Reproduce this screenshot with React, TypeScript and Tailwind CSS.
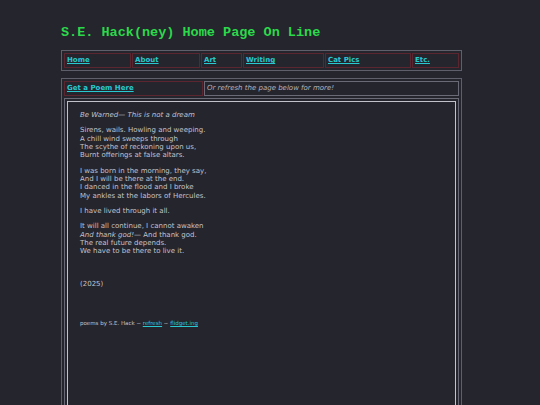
const navLinks = [
  { label: "Home", w: "w-[67px]" },
  { label: "About", w: "w-[68px]" },
  { label: "Art", w: "w-[41px]" },
  { label: "Writing", w: "w-[81px]" },
  { label: "Cat Pics", w: "w-[86px]" },
  { label: "Etc.", w: "flex-1" },
];

const stanzas: React.ReactNode[][] = [
  [
    "Sirens, wails. Howling and weeping.",
    "A chill wind sweeps through",
    "The scythe of reckoning upon us,",
    "Burnt offerings at false altars.",
  ],
  [
    "I was born in the morning, they say,",
    "And I will be there at the end.",
    "I danced in the flood and I broke",
    "My ankles at the labors of Hercules.",
  ],
  ["I have lived through it all."],
  [
    "It will all continue, I cannot awaken",
    <>
      <em>And thank god!</em>— And thank god.
    </>,
    "The real future depends.",
    "We have to be there to live it.",
  ],
];

export default function App() {
  return (
    <div className="h-[405px] bg-[#25252e] pl-[61px] pt-[25px] font-['DejaVu_Sans',sans-serif] overflow-hidden">
      <div className="w-[401px]">
        {/* Site title */}
        <h1 className="font-['Liberation_Mono',monospace] font-bold text-[13.5px] leading-[16px] text-[#2bd94a]">
          S.E. Hack(ney) Home Page On Line
        </h1>

        {/* Navigation table */}
        <div className="mt-[9px] border border-[#5f5f6b] p-[2px] flex gap-[1px]">
          {navLinks.map((l) => (
            <div
              key={l.label}
              className={`${l.w} h-[15px] border border-[#5c2631] px-[2px] flex items-center`}
            >
              <a className="text-[7px] font-bold text-[#28c9d0] underline">{l.label}</a>
            </div>
          ))}
        </div>

        {/* Poem table */}
        <div className="mt-[7px] border border-[#5f5f6b] p-[2px]">
          <div className="flex gap-[1px]">
            <div className="w-[139px] h-[15px] border border-[#5c2631] px-[2px] flex items-center">
              <a className="text-[7px] font-bold text-[#28c9d0] underline">Get a Poem Here</a>
            </div>
            <div className="flex-1 h-[15px] border border-[#6a6a76] px-[2px] flex items-center">
              <span className="text-[7px] italic text-[#b4b4bd]">Or refresh the page below for more!</span>
            </div>
          </div>
          <div className="mt-[2px] border border-[#6a6a76] p-[2px]">
            <div className="h-[330px] border border-[#c2c2ca] pl-[12px] pt-[9px] text-[7px] leading-[8.4px] text-[#c3c3cb]">
              <p className="italic mb-[6.8px]">Be Warned— This is not a dream</p>
              {stanzas.map((lines, i) => (
                <p key={i} className="mb-[6.8px]">
                  {lines.map((line, j) => (
                    <span key={j} className="block">
                      {line}
                    </span>
                  ))}
                </p>
              ))}
              <p className="mt-[24px]">(2025)</p>
              <p className="mt-[32px] text-[5.5px] leading-[7px]">
                poems by S.E. Hack ~ <a className="text-[#28c9d0] underline">refresh</a> ~{" "}
                <a className="text-[#28c9d0] underline">flidget.ing</a>
              </p>
            </div>
          </div>
        </div>
      </div>
    </div>
  );
}
